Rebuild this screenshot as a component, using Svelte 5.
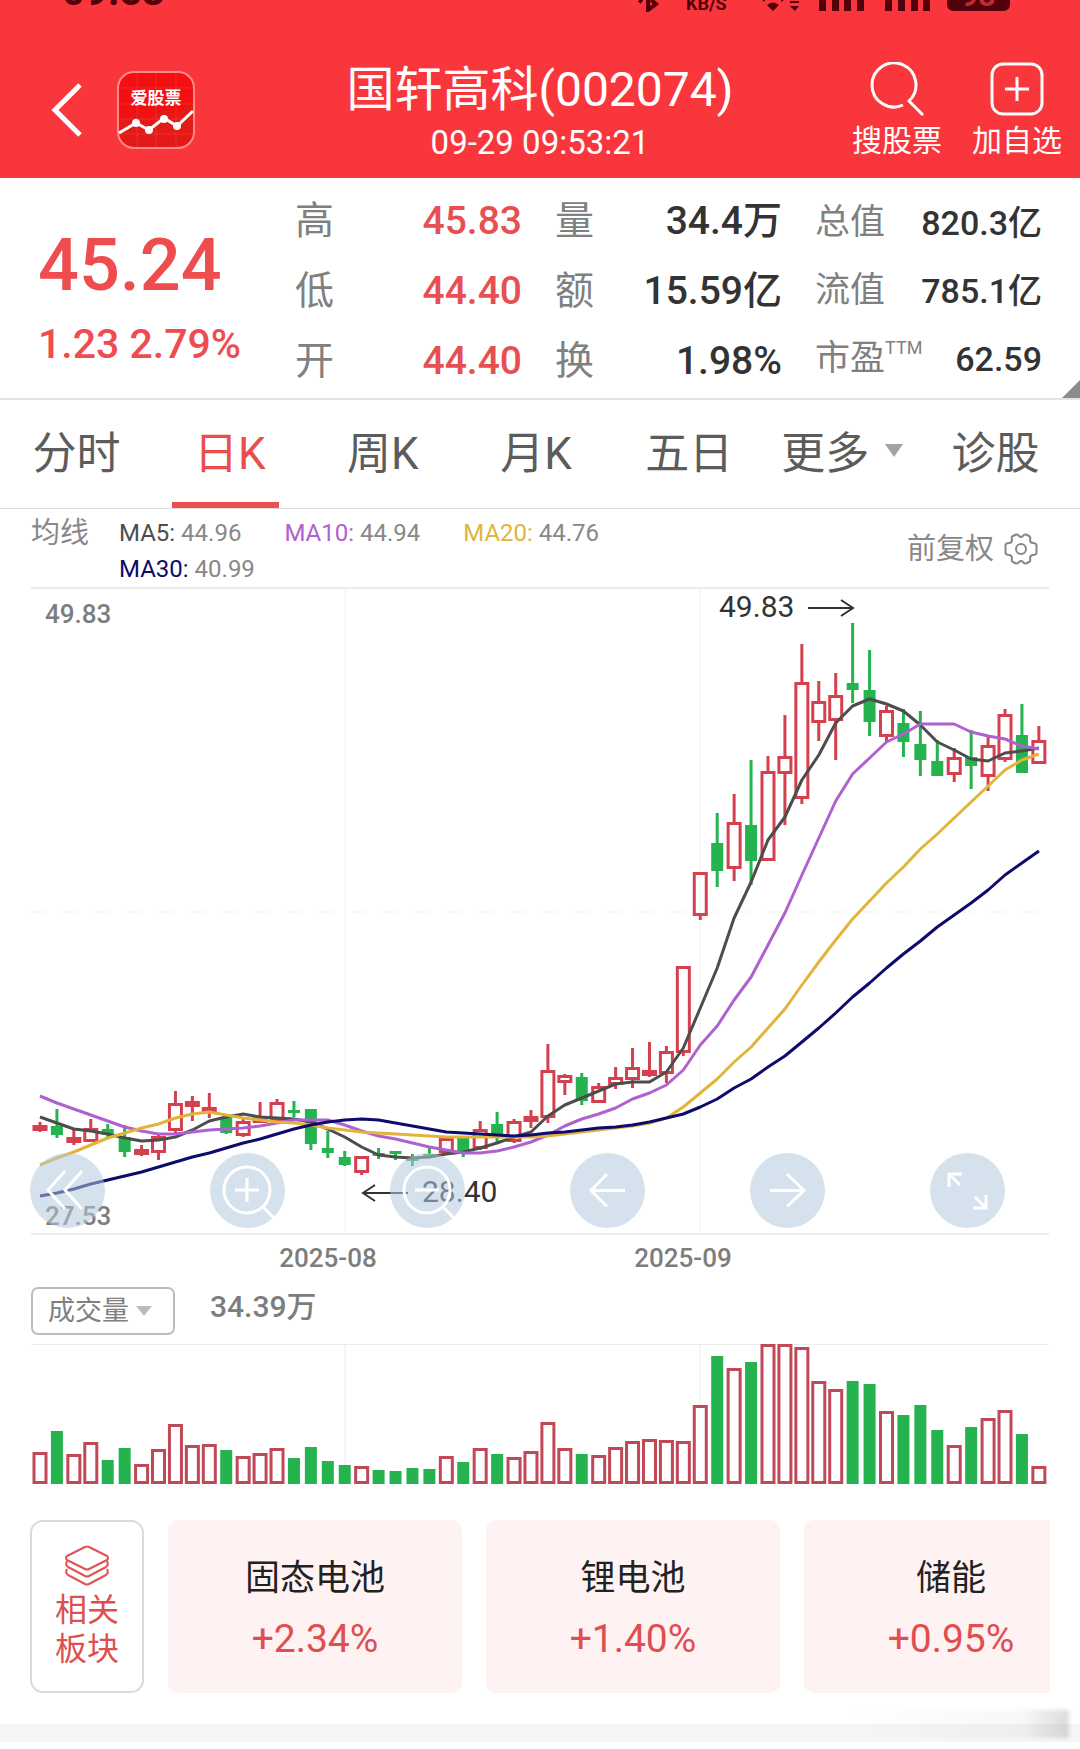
<script lang="ts">
	type Candle = [kind: string, high: number, top: number, bottom: number, low: number, volume: number];

	const STEP = 16.93;
	const FIRST_X = 40;
	const VOLUME_BASE = 1484;

	// kind, wick top, body top, body bottom, wick bottom, volume top
	const candles: Candle[] = [
		['up', 1122, 1125, 1131, 1132, 1452],
		['down', 1109, 1126, 1135, 1138, 1431],
		['up', 1130, 1137, 1143, 1145, 1454],
		['up', 1119, 1128, 1142, 1142, 1442],
		['down', 1124, 1129, 1135, 1138, 1460],
		['down', 1125, 1137, 1152, 1157, 1448],
		['up', 1145, 1149, 1155, 1156, 1464],
		['up', 1133, 1136, 1153, 1160, 1449],
		['up', 1091, 1103, 1131, 1133, 1424],
		['up', 1096, 1101, 1107, 1121, 1445],
		['up', 1093, 1107, 1113, 1118, 1444],
		['down', 1116, 1118, 1133, 1134, 1450],
		['up', 1118, 1121, 1136, 1137, 1456],
		['up', 1102, 1117, 1123, 1123, 1453],
		['up', 1099, 1102, 1122, 1124, 1448],
		['down', 1101, 1110, 1113, 1117, 1458],
		['down', 1109, 1109, 1144, 1150, 1447],
		['down', 1131, 1148, 1153, 1158, 1461],
		['down', 1151, 1157, 1165, 1166, 1465],
		['up', 1156, 1156, 1173, 1175, 1466],
		['down', 1148, 1153, 1156, 1159, 1470],
		['down', 1151, 1151, 1154, 1160, 1471],
		['down', 1154, 1159, 1161, 1166, 1468],
		['down', 1146, 1154, 1156, 1158, 1469],
		['up', 1138, 1138, 1153, 1153, 1456],
		['down', 1137, 1137, 1151, 1157, 1462],
		['up', 1121, 1129, 1149, 1150, 1448],
		['down', 1112, 1124, 1135, 1142, 1454],
		['up', 1119, 1121, 1142, 1143, 1457],
		['up', 1110, 1116, 1122, 1128, 1451],
		['up', 1044, 1070, 1118, 1123, 1422],
		['up', 1074, 1075, 1083, 1095, 1448],
		['down', 1073, 1077, 1101, 1105, 1454],
		['up', 1083, 1086, 1103, 1103, 1455],
		['up', 1067, 1077, 1085, 1089, 1447],
		['up', 1048, 1067, 1080, 1088, 1441],
		['up', 1042, 1070, 1076, 1077, 1439],
		['up', 1046, 1051, 1074, 1083, 1440],
		['up', 966, 966, 1053, 1056, 1441],
		['up', 872, 872, 916, 920, 1405],
		['down', 813, 843, 871, 887, 1356],
		['up', 794, 822, 869, 881, 1368],
		['down', 760, 825, 861, 885, 1362],
		['up', 756, 771, 861, 861, 1344],
		['up', 715, 756, 774, 825, 1344],
		['up', 644, 682, 799, 804, 1347],
		['up', 681, 701, 723, 741, 1381],
		['up', 673, 695, 721, 760, 1389],
		['down', 623, 683, 690, 703, 1381],
		['down', 650, 690, 722, 736, 1384],
		['up', 706, 710, 737, 743, 1411],
		['down', 709, 723, 742, 757, 1415],
		['down', 711, 744, 760, 776, 1405],
		['down', 740, 761, 776, 776, 1430],
		['up', 748, 757, 775, 782, 1445],
		['down', 730, 757, 766, 789, 1427],
		['up', 735, 745, 777, 791, 1418],
		['up', 709, 714, 760, 762, 1410],
		['down', 704, 735, 773, 773, 1434],
		['up', 726, 740, 764, 764, 1466]
	];

	const lines = [
		{
			name: 'MA5',
			value: '44.96',
			color: '#4d4d4d',
			points: [
				1117, 1123, 1129, 1131, 1134, 1138, 1141, 1140, 1137, 1130, 1121, 1117, 1114, 1117, 1118,
				1119, 1122, 1129, 1137, 1147, 1155, 1157, 1158, 1157, 1154, 1152, 1148, 1143, 1137, 1132,
				1116, 1105, 1098, 1091, 1084, 1082, 1082, 1072, 1048, 1008, 968, 918, 882, 840, 817, 780,
				755, 723, 706, 699, 704, 711, 725, 742, 750, 759, 761, 753, 751, 748
			]
		},
		{
			name: 'MA10',
			value: '44.94',
			color: '#b061d0',
			points: [
				1096, 1103, 1109, 1115, 1121, 1127, 1131, 1134, 1134, 1132, 1130, 1129, 1128, 1126, 1123,
				1120, 1120, 1120, 1125, 1131, 1136, 1139, 1143, 1147, 1150, 1153, 1153, 1151, 1147, 1142,
				1135, 1126, 1119, 1114, 1108, 1099, 1093, 1085, 1070, 1045, 1026, 1000, 977, 945, 913, 875,
				838, 801, 774, 758, 742, 734, 724, 724, 724, 732, 736, 739, 746, 749
			]
		},
		{
			name: 'MA20',
			value: '44.76',
			color: '#e3b43c',
			points: [
				1165, 1158, 1152, 1145, 1138, 1133, 1128, 1124, 1118, 1114, 1112, 1115, 1118, 1120, 1122,
				1123, 1125, 1128, 1130, 1132, 1133, 1134, 1135, 1136, 1137, 1137, 1137, 1137, 1137, 1137,
				1136, 1134, 1132, 1130, 1128, 1126, 1123, 1118, 1107, 1093, 1079, 1062, 1047, 1028, 1009,
				985, 962, 940, 919, 901, 883, 867, 849, 834, 818, 802, 786, 770, 760, 754
			]
		},
		{
			name: 'MA30',
			value: '40.99',
			color: '#0d0b6b',
			points: [
				1196, 1193, 1189, 1184, 1180, 1176, 1172, 1167, 1162, 1157, 1153, 1148, 1143, 1139, 1134,
				1129, 1125, 1122, 1120, 1119, 1120, 1123, 1126, 1129, 1132, 1133, 1134, 1135, 1136, 1135,
				1133, 1132, 1130, 1128, 1127, 1125, 1122, 1118, 1114, 1107, 1099, 1088, 1079, 1067, 1056,
				1042, 1028, 1013, 997, 983, 968, 954, 941, 927, 915, 903, 890, 875, 863, 851
			]
		}
	];

	const stats = [
		[
			{ label: '高', value: '45.83', rise: true },
			{ label: '低', value: '44.40', rise: true },
			{ label: '开', value: '44.40', rise: true }
		],
		[
			{ label: '量', value: '34.4万' },
			{ label: '额', value: '15.59亿' },
			{ label: '换', value: '1.98%' }
		],
		[
			{ label: '总值', value: '820.3亿' },
			{ label: '流值', value: '785.1亿' },
			{ label: '市盈', sup: 'TTM', value: '62.59' }
		]
	];

	const tabs = ['分时', '日K', '周K', '月K', '五日', '更多', '诊股'];

	const tools = [
		{ label: '最早', path: 'M35 18 18 37l17 19M52 18 35 37l17 19' },
		{ label: '放大', path: 'M60 37a23 23 0 1 1-46 0a23 23 0 1 1 46 0M25 37h24M37 25v24M53 54l11 11' },
		{ label: '缩小', path: 'M60 37a23 23 0 1 1-46 0a23 23 0 1 1 46 0M25 37h24M53 54l11 11' },
		{ label: '左移', path: 'M37 21 21 37.500l16 16M21 37.500h34' },
		{ label: '右移', path: 'M37 21l17 16.500-17 16M54 37.500H20' },
		{ label: '全屏', path: 'M32 21H19v13M19 21l11 11M43 55h13V42M56 55 45 44' }
	];

	const sectors = [
		{ name: '固态电池', change: '+2.34%' },
		{ name: '锂电池', change: '+1.40%' },
		{ name: '储能', change: '+0.95%' }
	];

	let activeTab = $state('日K');

	const xAt = (i: number) => FIRST_X + i * STEP;
	const toPoints = (ys: number[]) => ys.map((y, i) => `${xAt(i).toFixed(1)},${y}`).join(' ');
</script>

<div class="page">
	<header class="header">
		<div class="status" aria-hidden="true">
			<span class="clock">09:53</span>
			<svg class="status-icons" viewBox="636 0 376 12" width="376" height="12">
				<path d="M639 0l3 2M648 0v10l8-6-5-4" fill="none" stroke="currentColor" stroke-width="4" />
				<text x="686" y="10" font-size="18" font-weight="700" fill="currentColor">KB/S</text>
				<path d="M767 5q6-5 12 0l-6 6zM762 0h3v2zM781 0h3l-3 2zM790 3h9v-2h-9zM790 6h9l-4 5z" fill="currentColor" />
				<path d="M819 0h7v11h-7zM832 0h7v11h-7zM844 0h7v11h-7zM857 0h7v11h-7z" fill="currentColor" />
				<path d="M885 0h7v11h-7zM898 0h7v11h-7zM911 0h7v11h-7zM923 0h7v11h-7z" fill="currentColor" />
				<path d="M947 0h63v4q0 7-7 7h-49q-7 0-7-7z" fill="currentColor" />
				<text x="961" y="6" font-size="30" font-weight="700" fill="#c02a35">98</text>
			</svg>
		</div>

		<div class="header-side">
			<button class="back" aria-label="返回">
				<svg viewBox="0 0 36 56" width="36" height="56">
					<path d="M32 3 7 28l25 25" fill="none" stroke="#fff" stroke-width="5" />
				</svg>
			</button>
			<svg class="logo" viewBox="0 0 78 78" width="78" height="78" role="img" aria-label="爱股票">
				<rect x="1" y="1" width="76" height="76" rx="16" fill="#f30f12" />
				<path d="M2 50l17-9 13 7 15-11 13 7 16-14v31q0 16-14 16H16Q2 77 2 62z" fill="#e41a18" />
				<path d="M20 2v74M39 2v74M59 2v74M2 17h74M2 33h74M2 48h74M2 63h74" stroke="#ff5a55" stroke-opacity=".35" />
				<rect x="1" y="1" width="76" height="76" rx="16" fill="none" stroke="#ff8b8b" stroke-width="2" />
				<text x="39" y="33" text-anchor="middle" font-size="17" font-weight="700" fill="#fff">爱股票</text>
				<path d="M2 62l17-10 13 7 15-12 13 8 16-15" fill="none" stroke="#fff" stroke-width="3" />
				<g fill="#fff">
					<circle cx="19" cy="52" r="4" />
					<circle cx="32" cy="59" r="4" />
					<circle cx="47" cy="48" r="4" />
					<circle cx="60" cy="55" r="4" />
				</g>
			</svg>
		</div>

		<div class="title">
			<h1>国轩高科(002074)</h1>
			<time>09-29 09:53:21</time>
		</div>

		<div class="actions">
			<button class="action">
				<svg viewBox="0 0 54 54" width="54" height="54">
					<path d="M33 43A22 22 0 1 1 39 39L53 53" fill="none" stroke="#fff" stroke-width="3" stroke-linejoin="round" />
				</svg>
				<span>搜股票</span>
			</button>
			<button class="action">
				<svg viewBox="0 0 54 54" width="54" height="54">
					<rect x="2" y="2" width="50" height="50" rx="11" fill="none" stroke="#fff" stroke-width="3" />
					<path d="M27 15v24M15 27h24" stroke="#fff" stroke-width="3" />
				</svg>
				<span>加自选</span>
			</button>
		</div>
	</header>

	<section class="quote">
		<div class="price">
			<strong>45.24</strong>
			<span>1.23 2.79%</span>
		</div>
		{#each stats as column, c}
			<dl class="stats" class:compact={c === 2}>
				{#each column as item (item.label)}
					<div class="stat">
						<dt>{item.label}{#if item.sup}<sup>{item.sup}</sup>{/if}</dt>
						<dd class:rise={item.rise}>{item.value}</dd>
					</div>
				{/each}
			</dl>
		{/each}
	</section>

	<nav class="tabs">
		{#each tabs as tab (tab)}
			<button class="tab" class:active={activeTab === tab} onclick={() => (activeTab = tab)}>
				{tab}
				{#if tab === '更多'}<i class="caret"></i>{/if}
			</button>
		{/each}
	</nav>

	<section class="legend">
		<span class="legend-title">均线</span>
		<ul>
			{#each lines as line (line.name)}
				<li><span style:color={line.color}>{line.name}:</span> {line.value}</li>
			{/each}
		</ul>
		<button class="adjust">
			前复权
			<svg viewBox="0 0 34 34" width="34" height="34" fill="none" stroke="#888" stroke-width="2" stroke-linejoin="round">
				<path d="M12 2.500Q14 2 15 4Q17 6 19 4Q20 2 22 2.500L25 4Q27 5 26 7.500Q26 11 29 11Q32 11 32.500 13V21Q32 23 29 23Q26 23 26 26.500Q27 29 25 30L22 31.500Q20 32 19 30Q17 28 15 30Q14 32 12 31.500L9 30Q7 29 8 26.500Q8 23 5 23Q2 23 1.500 21V13Q2 11 5 11Q8 11 8 7.500Q7 5 9 4Z" />
				<circle cx="17" cy="17" r="5" />
			</svg>
		</button>
	</section>

	<section class="chart">
		<svg class="plot" viewBox="31 587 1018 690" role="img" aria-label="日K线图">
			<g stroke="#f0f0f0" fill="none">
				<path d="M31 588h1018M31 1234h1018" stroke="#ececec" stroke-width="2" />
				<path d="M345 588v646M700 588v646" />
				<path d="M31 912h1018" stroke="#f3f3f3" stroke-dasharray="16 16" />
			</g>

			{#each candles as [kind, high, top, bottom, low], i}
				{@const x = xAt(i)}
				{#if kind === 'up'}
					<g stroke="#d5404f" stroke-width="3" fill="none">
						<path d="M{x} {high}V{top + 1}M{x} {bottom - 1}V{low}" />
						<rect x={x - 6} y={top + 1.5} width="12" height={bottom - top - 3} />
					</g>
				{:else}
					<g fill="#25b34f">
						<rect x={x - 1.5} y={high} width="3" height={low - high} />
						<rect x={x - 6} y={top} width="12" height={bottom - top} />
					</g>
				{/if}
			{/each}

			{#each lines as line (line.name)}
				<polyline points={toPoints(line.points)} fill="none" stroke={line.color} stroke-width="3" stroke-linejoin="round" />
			{/each}

			<g class="bound">
				<text x="45" y="623">49.83</text>
				<text x="45" y="1225">27.53</text>
				<text x="328" y="1267" text-anchor="middle">2025-08</text>
				<text x="683" y="1267" text-anchor="middle">2025-09</text>
			</g>

			<g class="extreme">
				<text x="719" y="617">49.83</text>
				<path d="M808 608h45M841 600l12 8-12 8" />
				<text x="422" y="1202">28.40</text>
				<path d="M408 1193h-45M375 1185l-12 8 12 8" />
			</g>
		</svg>

		<div class="tools">
			{#each tools as tool (tool.label)}
				<button class="tool" aria-label={tool.label}>
					<svg viewBox="0 0 75 75"><path d={tool.path} fill="none" stroke="#fff" stroke-width="3" /></svg>
				</button>
			{/each}
		</div>
	</section>

	<section class="volume">
		<div class="volume-bar">
			<div class="picker">
				<select aria-label="副图指标">
					<option>成交量</option>
				</select>
				<i class="caret small"></i>
			</div>
			<span class="volume-value">34.39万</span>
		</div>
		<svg class="plot" viewBox="31 1343 1018 143" role="img" aria-label="成交量">
			<path d="M31 1344.500h1018M345 1344v140M700 1344v140" stroke="#ececec" fill="none" />
			{#each candles as [kind, , , , , top], i}
				{#if kind === 'up'}
					<rect x={xAt(i) - 6} y={top + 1.5} width="12" height={VOLUME_BASE - top - 3} fill="#fff" stroke="#c04857" stroke-width="3" />
				{:else}
					<rect x={xAt(i) - 6} y={top} width="12" height={VOLUME_BASE - top} fill="#25b34f" />
				{/if}
			{/each}
		</svg>
	</section>

	<section class="sectors">
		<button class="related">
			<svg viewBox="0 0 44 42" width="44" height="42" fill="none" stroke="#df5354" stroke-width="2" stroke-linejoin="round">
				<path d="M20 2Q22 1 24 2L42 11Q44 13 42 15L24 24Q22 25 20 24L2 15Q0 13 2 11Z" />
				<path d="M2 16Q0 20 3 22L20 31Q22 32 24 31L41 22Q44 20 42 16" />
				<path d="M2 24Q0 28 3 30L20 39Q22 40 24 39L41 30Q44 28 42 24" />
			</svg>
			<span>相关<br />板块</span>
		</button>
		<div class="cards">
			{#each sectors as sector (sector.name)}
				<a class="card" href="#{sector.name}">
					<span class="card-name">{sector.name}</span>
					<span class="card-change">{sector.change}</span>
				</a>
			{/each}
		</div>
	</section>

	<div class="divider"></div>
</div>

<style>
	:global(body) {
		margin: 0;
		background: #fff;
	}

	.page {
		font-family: Roboto, 'Noto Sans CJK SC', sans-serif;
		color: #666;
		overflow: hidden;
	}

	button {
		margin: 0;
		padding: 0;
		border: none;
		background: transparent;
		color: inherit;
		font: inherit;
		cursor: pointer;
	}

	svg {
		display: block;
		flex: none;
	}

	.header {
		position: relative;
		display: grid;
		grid-template-columns: 1fr auto 1fr;
		align-items: center;
		padding: 57px 18px 15px;
		background: #f9363b;
		color: #fff;
	}

	.status {
		position: absolute;
		top: 0;
		left: 0;
		right: 0;
		display: flex;
		justify-content: space-between;
		align-items: flex-end;
		height: 12px;
		padding: 0 68px 0 62px;
		color: #52000a;
		overflow: hidden;
	}

	.clock {
		font-size: 40px;
		font-weight: 700;
		line-height: 40px;
	}

	.header-side {
		display: flex;
		align-items: center;
		gap: 33px;
		padding-left: 30px;
	}

	.title {
		display: flex;
		flex-direction: column;
		align-items: center;
	}

	h1 {
		margin: 0;
		font-size: 48px;
		font-weight: 400;
		line-height: 66px;
	}

	time {
		font-size: 33px;
		line-height: 40px;
	}

	.actions {
		display: flex;
		justify-content: flex-end;
		gap: 30px;
	}

	.action {
		display: flex;
		flex-direction: column;
		align-items: center;
		gap: 8px;
		font-size: 30px;
		line-height: 34px;
	}

	.quote {
		position: relative;
		display: grid;
		grid-template-columns: 1fr 227px 227px 227px;
		column-gap: 33px;
		align-items: center;
		padding: 8px 38px 2px;
		border-bottom: 2px solid #e4e4e4;
	}

	.quote::after {
		content: '';
		position: absolute;
		right: 0;
		bottom: 0;
		border-left: 18px solid transparent;
		border-bottom: 18px solid #8c8c8c;
	}

	.price {
		display: flex;
		flex-direction: column;
		gap: 8px;
		padding-top: 14px;
		color: #ef4c50;
		font-weight: 500;
		white-space: nowrap;
	}

	.price strong {
		font-size: 72px;
		font-weight: 500;
		line-height: 84px;
	}

	.price span {
		font-size: 41px;
		line-height: 56px;
	}

	.stats {
		margin: 0;
		font-size: 39px;
		line-height: 70px;
	}

	.stats.compact {
		font-size: 34px;
		line-height: 68px;
	}

	.stat {
		display: flex;
		justify-content: space-between;
		white-space: nowrap;
	}

	dt {
		color: #808080;
	}

	.compact dt {
		font-size: 35px;
	}

	dd {
		margin: 0;
		color: #333;
		font-weight: 500;
	}

	dd.rise {
		color: #e84f52;
	}

	sup {
		font-size: 18px;
		line-height: 18px;
		vertical-align: 16px;
	}

	.tabs {
		display: flex;
		padding-right: 8px;
		border-bottom: 1px solid #dcdcdc;
	}

	.tab {
		position: relative;
		flex: 1;
		display: flex;
		align-items: center;
		justify-content: center;
		gap: 16px;
		height: 108px;
		padding-bottom: 8px;
		color: #5c5c5c;
		font-size: 44px;
		white-space: nowrap;
	}

	.tab.active {
		color: #ea4d4d;
	}

	.tab.active::after {
		content: '';
		position: absolute;
		bottom: 0;
		left: 12%;
		width: 70%;
		height: 6px;
		background: #ea5050;
	}

	.caret {
		border: 9px solid transparent;
		border-top: 13px solid #a3a3a3;
		border-bottom: 0;
	}

	.caret.small {
		border-width: 10px 8px 0;
		border-top-color: #bbb;
	}

	.legend {
		display: flex;
		align-items: flex-start;
		padding: 6px 42px 0 31px;
		color: #888;
		font-size: 24px;
		line-height: 36px;
	}

	.legend-title {
		margin-right: 30px;
		font-size: 29px;
	}

	.legend ul {
		display: flex;
		flex-wrap: wrap;
		column-gap: 43px;
		max-width: 600px;
		margin: 0;
		padding: 0;
		list-style: none;
	}

	.adjust {
		display: flex;
		align-items: center;
		gap: 10px;
		margin-left: auto;
		padding-top: 16px;
		font-size: 29px;
	}

	.chart {
		position: relative;
		padding: 0 31px;
	}

	.plot {
		width: 100%;
		height: auto;
	}

	.bound {
		fill: #7d7d7d;
		font-size: 26px;
		font-weight: 500;
	}

	.extreme text {
		fill: #333;
		font-size: 30px;
	}

	.extreme path {
		fill: none;
		stroke: #333;
		stroke-width: 2;
	}

	.tools {
		position: absolute;
		left: 30px;
		right: 75px;
		bottom: 49px;
		display: flex;
		justify-content: space-between;
	}

	.tool {
		width: 75px;
		height: 75px;
		border-radius: 50%;
		background: rgba(179, 200, 220, 0.55);
		overflow: hidden;
	}

	.volume {
		padding: 10px 31px 0;
	}

	.volume-bar {
		display: flex;
		align-items: flex-start;
		gap: 35px;
		margin-bottom: 8px;
	}

	.picker {
		position: relative;
		display: flex;
		align-items: center;
	}

	.picker .caret {
		position: absolute;
		right: 23px;
		pointer-events: none;
	}

	select {
		width: 144px;
		height: 48px;
		padding: 0 0 0 15px;
		border: 2px solid #bdbdbd;
		border-radius: 7px;
		appearance: none;
		background: #fff;
		color: #808080;
		font-family: inherit;
		font-size: 27px;
	}

	.volume-value {
		color: #7d7d7d;
		font-size: 30px;
		font-weight: 500;
		line-height: 40px;
	}

	.sectors {
		display: flex;
		gap: 24px;
		padding: 34px 30px 31px;
	}

	.related {
		display: flex;
		flex: none;
		flex-direction: column;
		align-items: center;
		justify-content: center;
		gap: 4px;
		box-sizing: border-box;
		width: 114px;
		height: 173px;
		border: 2px solid #dadada;
		border-radius: 13px;
		color: #dd5050;
		font-size: 32px;
		line-height: 39px;
	}

	.cards {
		display: flex;
		flex: 1;
		gap: 24px;
		min-width: 0;
		overflow: hidden;
	}

	.card {
		display: flex;
		flex: none;
		flex-direction: column;
		align-items: center;
		justify-content: center;
		gap: 8px;
		width: 294px;
		padding-top: 5px;
		box-sizing: border-box;
		border-radius: 10px;
		background: #fef2f2;
		color: #222;
		text-decoration: none;
	}

	.card-name {
		font-size: 35px;
		line-height: 52px;
	}

	.card-change {
		color: #e04e50;
		font-size: 39px;
		line-height: 52px;
	}

	.divider {
		position: relative;
		height: 18px;
		margin-bottom: 7px;
		background: #f6f6f6;
	}

	.divider::after {
		content: '';
		position: absolute;
		right: 11px;
		bottom: 4px;
		width: 230px;
		height: 28px;
		background: linear-gradient(to right, transparent, rgba(0, 0, 0, 0.03) 80%, rgba(0, 0, 0, 0.14));
		filter: blur(2px);
	}
</style>
